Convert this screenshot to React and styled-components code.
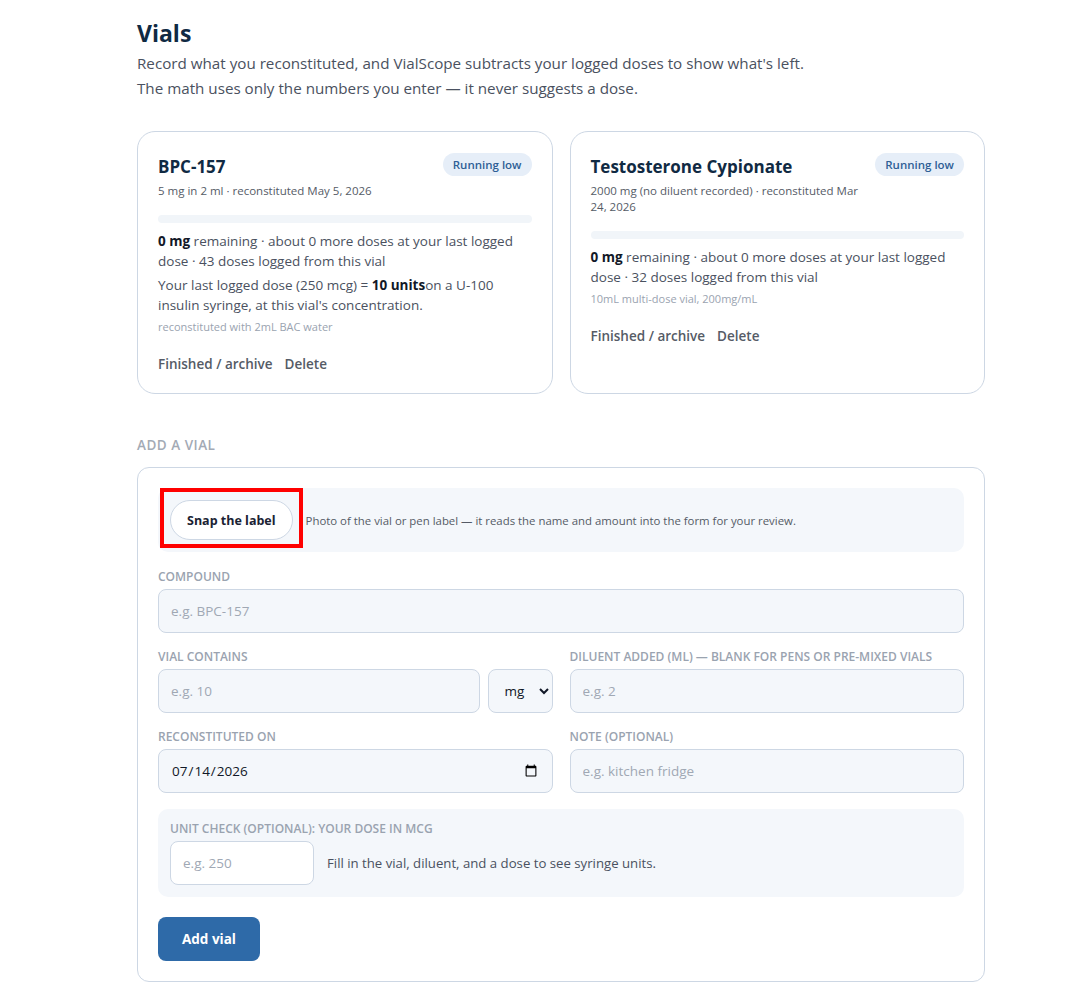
import styled, { createGlobalStyle } from "styled-components";

const GlobalStyle = createGlobalStyle`
  body {
    margin: 0;
    background: #fff;
    font-family: "Open Sans", "Noto Sans", sans-serif;
    color: #1f2937;
  }
`;

const Page = styled.div`
  width: 848px;
  margin-left: 137px;
  padding: 18px 0 20px;
`;

const Title = styled.h1`
  margin: 0;
  font-size: 23px;
  font-weight: 700;
  color: #102a43;
  line-height: 30px;
`;

const Intro = styled.p`
  margin: 3px 0 0;
  font-size: 15.2px;
  line-height: 25px;
  color: #4a5160;
`;

const Cards = styled.div`
  display: grid;
  grid-template-columns: 1fr 1fr;
  gap: 17px;
  margin-top: 30px;
`;

const Card = styled.div`
  border: 1px solid #cdd7e4;
  border-radius: 18px;
  padding: 21px 20px 20px;
  min-height: 218px;
`;

const CardHead = styled.div`
  display: flex;
  justify-content: space-between;
  align-items: flex-start;
  gap: 12px;
`;

const CardName = styled.h2`
  margin: 3px 0 0;
  font-size: 17px;
  font-weight: 700;
  color: #102a43;
  line-height: 22px;
`;

const Badge = styled.span`
  flex-shrink: 0;
  background: #e6eef8;
  color: #2f5f96;
  font-size: 11.5px;
  font-weight: 600;
  border-radius: 12px;
  padding: 3px 10px;
  line-height: 17px;
`;

const Meta = styled.div`
  font-size: 11.5px;
  color: #555b66;
  line-height: 16px;
  margin-top: 5px;
  max-width: 270px;
`;

const Bar = styled.div`
  height: 8px;
  border-radius: 4px;
  background: #f1f5f9;
  margin: 16px 0 8px;
`;

const Line = styled.p`
  margin: 0 0 4px;
  font-size: 13.5px;
  line-height: 20px;
  color: #4a5160;
  b {
    color: #111827;
    font-weight: 700;
  }
`;

const Note = styled.div`
  font-size: 11px;
  color: #9aa3b0;
  line-height: 16px;
`;

const Actions = styled.div`
  display: flex;
  gap: 12px;
  margin-top: 20px;
`;

const TextButton = styled.button`
  border: none;
  background: none;
  padding: 0;
  font-family: inherit;
  font-size: 13.5px;
  font-weight: 600;
  color: #555b66;
  cursor: pointer;
`;

const SectionLabel = styled.div`
  margin: 42px 0 13px;
  font-size: 13.5px;
  font-weight: 600;
  color: #a3aab5;
  letter-spacing: 0.5px;
`;

const FormCard = styled.div`
  border: 1px solid #cdd7e4;
  border-radius: 12px;
  padding: 20px;
  display: flex;
  flex-direction: column;
`;

const SnapRow = styled.div`
  display: flex;
  align-items: center;
  gap: 13px;
  background: #f4f7fb;
  border-radius: 10px;
  padding: 12px;
`;

/* red frame drawn over the snap button */
const Highlight = styled.span`
  position: relative;
  display: inline-flex;
  &::after {
    content: "";
    position: absolute;
    inset: -12px -10px -8px -10px;
    border: 4px solid #ff0000;
    pointer-events: none;
  }
`;

const PillButton = styled.button`
  height: 40px;
  padding: 0 16px;
  border-radius: 20px;
  border: 1px solid #cdd7e4;
  background: #fff;
  font-family: inherit;
  font-size: 12.5px;
  font-weight: 700;
  color: #1a2233;
`;

const Hint = styled.span`
  font-size: 11.4px;
  color: #555b66;
`;

const Row = styled.div`
  display: grid;
  grid-template-columns: 1fr 1fr;
  gap: 17px;
  margin-top: 16px;
`;

const Field = styled.label`
  display: flex;
  flex-direction: column;
  gap: 4px;
  margin-top: ${(p) => p.$top || 0}px;
`;

const FieldLabel = styled.span`
  font-size: 12px;
  font-weight: 600;
  color: #9aa3b0;
  line-height: 16px;
  text-transform: uppercase;
`;

const Input = styled.input`
  box-sizing: border-box;
  height: 44px;
  width: 100%;
  border: 1px solid #cdd7e4;
  border-radius: 8px;
  background: ${(p) => (p.$white ? "#fff" : "#f4f7fb")};
  padding: 0 12px;
  font-family: inherit;
  font-size: 13.5px;
  color: #111827;
  &::placeholder {
    color: #a0a8b4;
  }
`;

const Select = styled.select`
  box-sizing: border-box;
  height: 44px;
  width: 65px;
  flex-shrink: 0;
  border: 1px solid #cdd7e4;
  border-radius: 8px;
  background: #f4f7fb;
  padding: 0 4px 0 12px;
  font-family: inherit;
  font-size: 13.5px;
  color: #111827;
`;

const InputGroup = styled.div`
  display: flex;
  gap: 8px;
`;

const UnitBox = styled.div`
  margin-top: 16px;
  background: #f4f7fb;
  border-radius: 10px;
  padding: 12px;
  display: flex;
  flex-direction: column;
  gap: 4px;
`;

const UnitRow = styled.div`
  display: flex;
  align-items: center;
  gap: 13px;
  span {
    font-size: 13.2px;
    color: #4a5160;
  }
  input {
    width: 144px;
  }
`;

const PrimaryButton = styled.button`
  align-self: flex-start;
  margin-top: 20px;
  height: 44px;
  padding: 0 24px;
  border: none;
  border-radius: 8px;
  background: #2e6aa8;
  color: #fff;
  font-family: inherit;
  font-size: 13.5px;
  font-weight: 700;
`;

const vials = [
  {
    name: "BPC-157",
    meta: "5 mg in 2 ml · reconstituted May 5, 2026",
    logged: 43,
    unit: true,
    note: "reconstituted with 2mL BAC water",
  },
  {
    name: "Testosterone Cypionate",
    meta: "2000 mg (no diluent recorded) · reconstituted Mar 24, 2026",
    logged: 32,
    unit: false,
    note: "10mL multi-dose vial, 200mg/mL",
  },
];

const VialCard = ({ vial }) => (
  <Card>
    <CardHead>
      <CardName>{vial.name}</CardName>
      <Badge>Running low</Badge>
    </CardHead>
    <Meta>{vial.meta}</Meta>
    <Bar />
    <Line>
      <b>0 mg</b> remaining · about 0 more doses at your last logged dose · {vial.logged} doses logged from this vial
    </Line>
    {vial.unit && (
      <Line>
        Your last logged dose (250 mcg) = <b>10 units</b>on a U-100 insulin syringe, at this vial's concentration.
      </Line>
    )}
    <Note>{vial.note}</Note>
    <Actions>
      <TextButton>Finished / archive</TextButton>
      <TextButton>Delete</TextButton>
    </Actions>
  </Card>
);

export default function App() {
  return (
    <>
      <GlobalStyle />
      <Page>
        <Title>Vials</Title>
        <Intro>
          Record what you reconstituted, and VialScope subtracts your logged doses to show what's left.
          <br />
          The math uses only the numbers you enter — it never suggests a dose.
        </Intro>

        <Cards>
          {vials.map((v) => (
            <VialCard key={v.name} vial={v} />
          ))}
        </Cards>

        <SectionLabel>ADD A VIAL</SectionLabel>
        <FormCard>
          <SnapRow>
            <Highlight>
              <PillButton>Snap the label</PillButton>
            </Highlight>
            <Hint>Photo of the vial or pen label — it reads the name and amount into the form for your review.</Hint>
          </SnapRow>

          <Field $top={17}>
            <FieldLabel>Compound</FieldLabel>
            <Input placeholder="e.g. BPC-157" />
          </Field>

          <Row>
            <Field>
              <FieldLabel>Vial contains</FieldLabel>
              <InputGroup>
                <Input placeholder="e.g. 10" />
                <Select defaultValue="mg">
                  <option value="mg">mg</option>
                  <option value="mcg">mcg</option>
                </Select>
              </InputGroup>
            </Field>
            <Field>
              <FieldLabel>Diluent added (ml) — blank for pens or pre-mixed vials</FieldLabel>
              <Input placeholder="e.g. 2" />
            </Field>
          </Row>

          <Row>
            <Field>
              <FieldLabel>Reconstituted on</FieldLabel>
              <Input type="date" defaultValue="2026-07-14" />
            </Field>
            <Field>
              <FieldLabel>Note (optional)</FieldLabel>
              <Input placeholder="e.g. kitchen fridge" />
            </Field>
          </Row>

          <UnitBox>
            <FieldLabel>Unit check (optional): your dose in mcg</FieldLabel>
            <UnitRow>
              <Input $white placeholder="e.g. 250" />
              <span>Fill in the vial, diluent, and a dose to see syringe units.</span>
            </UnitRow>
          </UnitBox>

          <PrimaryButton>Add vial</PrimaryButton>
        </FormCard>
      </Page>
    </>
  );
}
